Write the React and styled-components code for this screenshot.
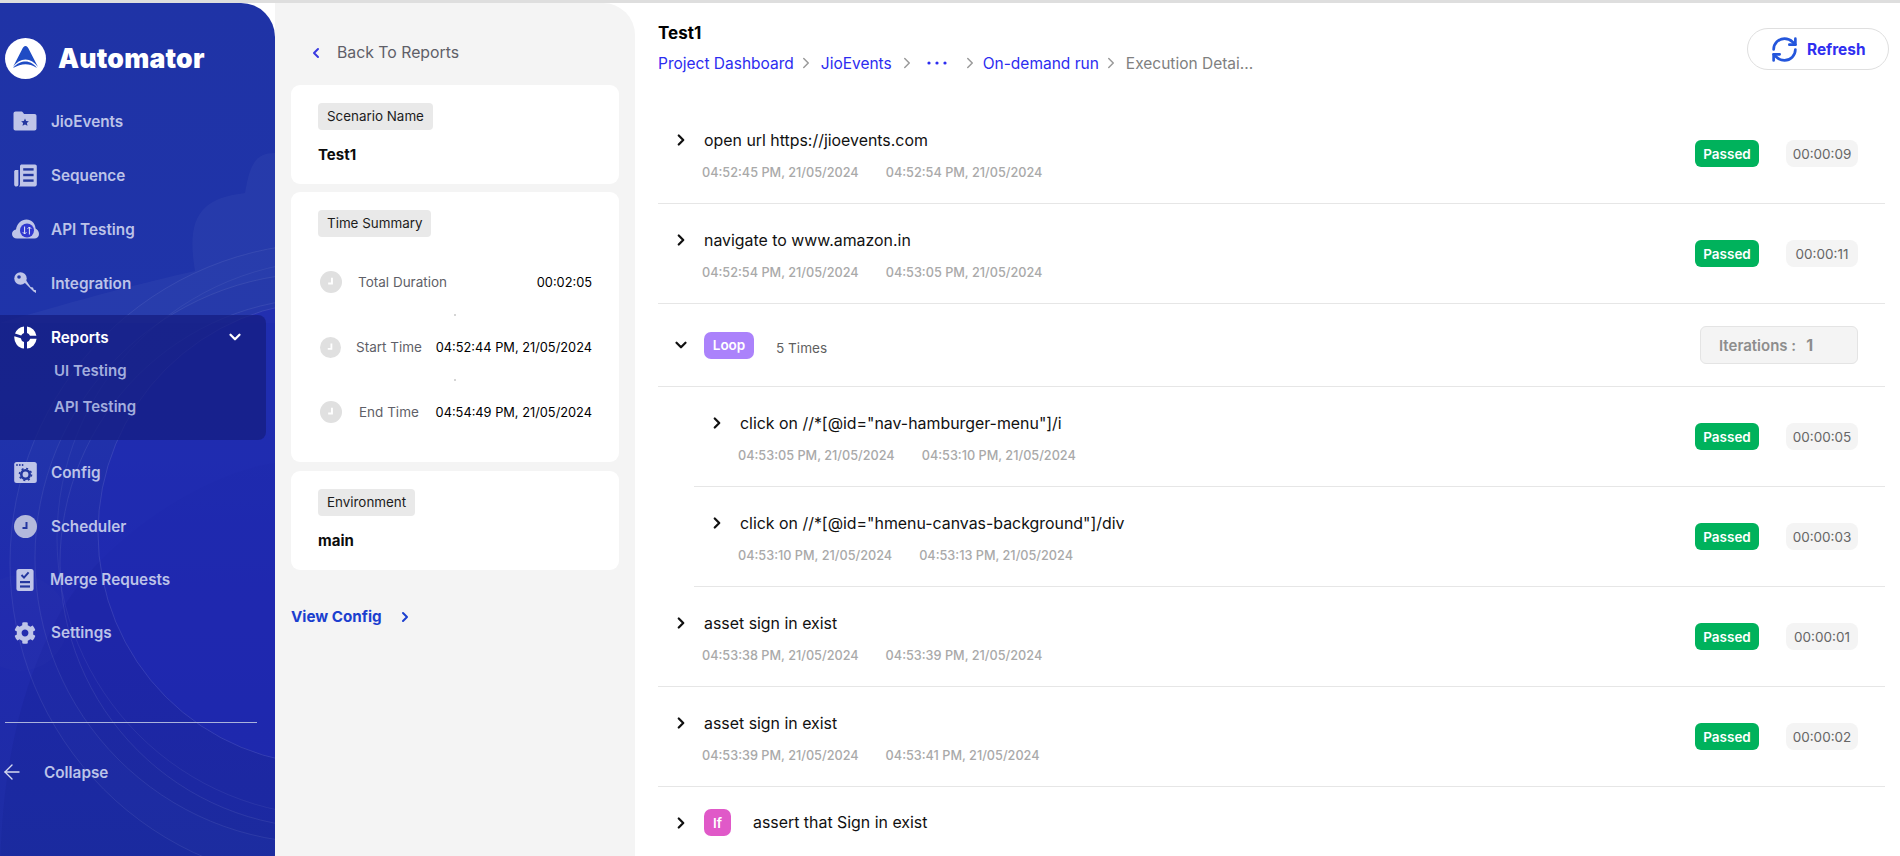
import styled, { createGlobalStyle } from 'styled-components';
import { ChevronDown, ChevronLeft, ChevronRight, ArrowLeft, RefreshCw } from 'lucide-react';
import { FaCog } from 'react-icons/fa';

const GlobalStyle = createGlobalStyle`
  html, body {
    margin: 0;
    padding: 0;
    height: 100%;
    overflow: hidden;
    background: #fff;
    font-family: Inter, "Liberation Sans", sans-serif;
  }
`;

const Page = styled.div`
  display: flex;
  height: 853px;
  border-top: 3px solid #dedede;
  overflow: hidden;
`;

const Sidebar = styled.aside`
  position: relative;
  flex: 0 0 275px;
  height: 885px;
  border-radius: 0 34px 34px 0;
  background: linear-gradient(180deg, #1f33a6 0%, #1f34aa 45%, #2029ae 70%, #1d2ea2 100%);
  overflow: hidden;
  color: #bcc3e8;
`;

const SidebarArt = styled.svg`
  position: absolute;
  inset: 0;
  width: 275px;
  height: 885px;
`;

const SidebarBody = styled.div`
  position: relative;
  display: flex;
  flex-direction: column;
`;

const Brand = styled.div`
  display: flex;
  align-items: center;
  gap: 12px;
  padding: 28px 0 0 5px;
  height: 54px;
  margin-bottom: 9px;
`;

const BrandName = styled.span`
  font-size: 26.6px;
  font-weight: 900;
  color: #fff;
  letter-spacing: 0.2px;
`;

const NavItem = styled.div`
  display: flex;
  align-items: center;
  height: ${({ $h }) => $h || 54}px;
  padding-left: ${({ $left }) => $left ?? 9}px;
  gap: ${({ $gap }) => $gap ?? 10}px;
  font-size: 15.3px;
  font-weight: 600;
  color: ${({ $active }) => ($active ? '#fff' : '#bcc3e8')};
`;

const NavIcon = styled.span`
  flex: 0 0 32px;
  width: 32px;
  height: 24px;
  display: flex;
  align-items: center;
  justify-content: center;
`;

const NavGroup = styled.div`
  width: 266px;
  height: 125px;
  margin: 5px 0 5px;
  background: rgba(22, 30, 130, 0.75);
  border-radius: 0 8px 8px 0;
  box-sizing: border-box;
`;

const GroupHead = styled(NavItem)`
  height: 44px;
  padding-right: 22px;
  & > svg {
    margin-left: auto;
  }
`;

const SubItem = styled.div`
  height: ${({ $h }) => $h}px;
  display: flex;
  align-items: center;
  padding-left: 54px;
  font-size: 15px;
  font-weight: 600;
  color: #a3aede;
`;

const SideDivider = styled.div`
  height: 1px;
  margin: 63px 18px 0 5px;
  background: #aab2dc;
`;

const CollapseRow = styled.div`
  display: flex;
  align-items: center;
  gap: 20px;
  margin-top: 37px;
  height: 24px;
  font-size: 15.3px;
  font-weight: 600;
  color: #bcc3e8;
`;

const Details = styled.section`
  flex: 0 0 360px;
  box-sizing: border-box;
  padding: 0 16px;
  background: #f4f4f4;
  border-radius: 0 32px 0 0;
`;

const BackLink = styled.div`
  display: flex;
  align-items: center;
  gap: 13px;
  height: 82px;
  padding: 17px 0 0 17px;
  box-sizing: border-box;
  font-size: 15.8px;
  color: #5f5f68;
`;

const Card = styled.div`
  background: #fff;
  border-radius: 9px;
  padding: 18px 27px 0;
  height: ${({ $h }) => $h}px;
  box-sizing: border-box;
  margin-bottom: ${({ $mb }) => $mb ?? 9}px;
`;

const Chip = styled.span`
  display: inline-block;
  height: 27px;
  line-height: 27px;
  padding: 0 9px;
  background: #e9e9e9;
  border-radius: 4px;
  font-size: 13.4px;
  color: #1c1c1c;
`;

const CardValue = styled.div`
  margin-top: 15px;
  font-size: 15px;
  font-weight: 700;
  color: #0c0c0c;
`;

const TimeRows = styled.div`
  display: flex;
  flex-direction: column;
  margin-top: 27px;
`;

const TimeRow = styled.div`
  display: flex;
  align-items: center;
  height: 36px;
  margin-left: 2px;
`;

const TimeTick = styled.div`
  height: 29px;
  display: flex;
  align-items: center;
  justify-content: center;
  &::after {
    content: '';
    width: 2px;
    height: 2px;
    background: #d5d5d5;
  }
`;

const TimeLabel = styled.span`
  margin-left: ${({ $left }) => $left}px;
  font-size: 13.5px;
  color: #5f5f68;
`;

const TimeValue = styled.span`
  margin-left: auto;
  font-size: 12.8px;
  color: #000;
`;

const ViewConfig = styled.div`
  display: flex;
  align-items: center;
  gap: 15px;
  margin-top: 37px;
  font-size: 15.2px;
  font-weight: 700;
  color: #1b3fcf;
`;

const Main = styled.main`
  flex: 1;
  min-width: 0;
  padding: 0 15px 0 23px;
`;

const Header = styled.header`
  display: flex;
  justify-content: space-between;
  height: 101px;
  box-sizing: border-box;
`;

const Title = styled.div`
  margin-top: 19px;
  height: 22px;
  line-height: 22px;
  font-size: 17px;
  font-weight: 700;
  color: #000;
`;

const Crumbs = styled.nav`
  display: flex;
  align-items: center;
  height: 22px;
  margin-top: 8px;
  font-size: 15.5px;
  color: #2c2cf0;
`;

const CrumbSep = styled(ChevronRight)`
  color: #9a9a9a;
  margin: 0 ${({ $r }) => $r ?? 6}px 0 ${({ $l }) => $l ?? 3}px;
`;

const CrumbDots = styled.svg`
  width: 20px;
  height: 6px;
`;

const CrumbLast = styled.span`
  color: #808080;
`;

const RefreshButton = styled.button`
  display: flex;
  align-items: center;
  gap: 8px;
  width: 142px;
  height: 42px;
  margin: 25px -4px 0 0;
  padding: 0 0 0 22px;
  box-sizing: border-box;
  background: #fff;
  border: 1px solid #dfdfdf;
  border-radius: 21px;
  font-family: Inter, sans-serif;
  font-size: 15.4px;
  font-weight: 700;
  color: #2f2ff0;
  & > svg {
    color: #2456dc;
  }
`;

const Row = styled.div`
  display: flex;
  justify-content: space-between;
  align-items: flex-start;
  height: 100px;
  box-sizing: border-box;
  padding: 25px 27px 0 13px;
  border-bottom: 1px solid #e6e6e6;
`;

const RowHead = styled.div`
  display: flex;
  align-items: center;
  height: 22px;
  gap: 13px;
  font-size: 15.9px;
  color: #111;
`;

const Toggle = styled.span`
  flex: 0 0 20px;
  height: 20px;
  display: flex;
  align-items: center;
  justify-content: center;
  color: #111;
`;

const RowTimes = styled.div`
  display: flex;
  gap: 27px;
  margin: 10px 0 0 31px;
  height: 22px;
  align-items: center;
  font-size: 12.7px;
  font-weight: 500;
  color: #a9a9a9;
`;

const RowRight = styled.div`
  display: flex;
  gap: 27px;
  margin-top: 11px;
`;

const Status = styled.span`
  display: flex;
  align-items: center;
  justify-content: center;
  width: 64px;
  height: 27px;
  border-radius: 6px;
  background: #00b25c;
  color: #fff;
  font-size: 13.5px;
  font-weight: 600;
`;

const Duration = styled.span`
  display: flex;
  align-items: center;
  justify-content: center;
  width: 72px;
  height: 27px;
  border-radius: 8px;
  background: #f4f4f4;
  color: #666;
  font-size: 13.5px;
`;

const Nested = styled.div`
  margin-left: 36px;
`;

const LoopRow = styled(Row)`
  height: 83px;
  padding-top: 0;
  align-items: center;
`;

const Badge = styled.span`
  display: flex;
  align-items: center;
  justify-content: center;
  width: ${({ $w }) => $w}px;
  height: 27px;
  border-radius: 7px;
  background: ${({ $bg }) => $bg};
  color: #fff;
  font-size: 13.5px;
  font-weight: 600;
`;

const LoopCount = styled.span`
  margin: 5px 0 0 9px;
  font-size: 13.6px;
  color: #5f5f5f;
`;

const Iterations = styled.div`
  display: flex;
  align-items: center;
  width: 158px;
  height: 38px;
  padding-left: 18px;
  box-sizing: border-box;
  background: #f4f4f4;
  border: 1px solid #e4e4e4;
  border-radius: 6px;
  font-size: 15px;
  font-weight: 600;
  color: #8d8d8d;
  & b {
    margin-left: 10px;
    font-size: 16px;
    font-weight: 700;
  }
`;

const IfRow = styled(Row)`
  height: 68px;
  padding-top: 22px;
  border-bottom: 0;
  & ${RowHead} {
    height: 27px;
  }
  & ${Badge} {
    margin-right: 9px;
  }
`;

const Logo = () => (
  <svg width="41" height="41" viewBox="0 0 41 41">
    <circle cx="20.5" cy="20.5" r="20.5" fill="#fff" />
    <path d="M20.5 8 C22 8 23 9.5 24 11.5 L33 29 C30 24.5 25 21.5 20.5 21.5 C16 21.5 11 24.5 8 29 L17 11.5 C18 9.5 19 8 20.5 8 Z" fill="#1f4cc4" />
    <path d="M8 30 C12 25 16.5 23.5 20.5 23.5 C25 23.5 29 26 32 30 C27.5 27 24 26.2 20.5 26.2 C16.5 26.2 12.5 27.5 8 30 Z" fill="#1f4cc4" />
  </svg>
);

const FolderIcon = () => (
  <svg width="24" height="20" viewBox="0 0 24 20">
    <path d="M0.5 2.5 C0.5 1.2 1.5 0.5 2.6 0.5 H8 C9 0.5 9.6 1 10.2 1.8 L11 3 H21.5 C22.8 3 23.5 3.8 23.5 5 V17.5 C23.5 18.8 22.6 19.5 21.5 19.5 H2.5 C1.3 19.5 0.5 18.7 0.5 17.5 Z" fill="#bfc5e8" />
    <path d="M12 7.5 L13.2 10 L15.9 10.3 L13.9 12.1 L14.5 14.8 L12 13.4 L9.5 14.8 L10.1 12.1 L8.1 10.3 L10.8 10 Z" fill="#24379f" />
  </svg>
);

const SequenceIcon = () => (
  <svg width="23" height="23" viewBox="0 0 23 23">
    <path d="M6 2 C6 1 6.8 0.4 7.8 0.4 H21 C22 0.4 22.8 1.2 22.8 2.2 V20.6 C22.8 21.7 22 22.5 21 22.5 H4 C5.2 22.5 6 21.6 6 20.4 Z" fill="#bfc5e8" />
    <path d="M0.2 7.5 C0.2 6.6 1 6 1.8 6 H4.4 V20.5 C4.4 21.6 3.6 22.5 2.4 22.5 C1 22.5 0.2 21.6 0.2 20.4 Z" fill="#bfc5e8" />
    <rect x="9.2" y="4.2" width="10.4" height="2.4" fill="#24379f" />
    <rect x="9.2" y="9.8" width="10.4" height="2.4" fill="#24379f" />
    <rect x="9.2" y="15.4" width="10.4" height="2.4" fill="#24379f" />
  </svg>
);

const CloudIcon = () => (
  <svg width="27" height="20" viewBox="0 0 27 20">
    <path d="M5 19.5 C2 19.5 0 17.6 0 15 C0 12.6 1.8 10.9 4 10.6 C4.8 4.6 9.5 0.5 14.5 0.5 C19.5 0.5 23 4 23.6 9.4 C25.6 10.4 27 12.4 27 15 C27 17.8 25 19.5 22.5 19.5 Z" fill="#bfc5e8" />
    <circle cx="15" cy="11.5" r="7" fill="#3138d0" />
    <path d="M12.6 7.5 V15 M10.8 13.2 L12.6 15 L14.4 13.2 M17.4 15.5 V8 M15.6 9.8 L17.4 8 L19.2 9.8" stroke="#e4e7f8" strokeWidth="1" fill="none" />
  </svg>
);

const KeyIcon = () => (
  <svg width="23" height="23" viewBox="0 0 23 23">
    <circle cx="6.5" cy="6.5" r="6.2" fill="#bfc5e8" />
    <circle cx="5" cy="5" r="1.8" fill="#2237a8" />
    <path d="M9 9 L19.5 19.5 L22 21 V18.2 L19.8 17.8 L19 15.4 L16.6 15 L11.5 7.5 Z" fill="#bfc5e8" />
  </svg>
);

const ReportsIcon = () => (
  <svg width="23" height="23" viewBox="0 0 23 23">
    <path d="M10 0.4 V7 A4.8 4.8 0 0 0 7.2 9.6 L1 7.6 A11 11 0 0 1 10 0.4 Z" fill="#fff" />
    <path d="M13 0.4 A11 11 0 0 1 22.4 9.8 H16 A4.8 4.8 0 0 0 13 7 Z" fill="#fff" />
    <path d="M0.4 10.2 L6.8 12.2 A4.8 4.8 0 0 0 10 16 V22.6 A11 11 0 0 1 0.4 10.2 Z" fill="#fff" />
    <path d="M16.2 12.8 H22.6 A11 11 0 0 1 13 22.6 V16 A4.8 4.8 0 0 0 16.2 12.8 Z" fill="#fff" />
  </svg>
);

const ConfigIcon = () => (
  <svg width="23" height="21" viewBox="0 0 23 21">
    <rect x="0.2" y="0" width="22.6" height="21" rx="2.5" fill="#bfc5e8" />
    <circle cx="3" cy="3" r="0.9" fill="#24379f" />
    <circle cx="5.8" cy="3" r="0.9" fill="#24379f" />
    <circle cx="8.6" cy="3" r="0.9" fill="#24379f" />
    <circle cx="11.5" cy="12.5" r="4.2" fill="none" stroke="#24379f" strokeWidth="2.6" />
    <circle cx="11.5" cy="12.5" r="6" fill="none" stroke="#24379f" strokeWidth="1.6" strokeDasharray="2 2.7" />
  </svg>
);

const ClockIcon = ({ size, color, hand }) => (
  <svg width={size} height={size} viewBox="0 0 23 23">
    <circle cx="11.5" cy="11.5" r="11.5" fill={color} />
    <path d="M12.5 7 V13 H8.5" fill="none" stroke={hand} strokeWidth="2" />
  </svg>
);

const MergeIcon = () => (
  <svg width="18" height="22" viewBox="0 0 18 22">
    <rect x="0.4" y="0" width="17.2" height="22" rx="2.5" fill="#bfc5e8" />
    <path d="M5.5 6 L8 8.6 L12.6 3.4" fill="none" stroke="#24379f" strokeWidth="2" />
    <rect x="4" y="12" width="10" height="2.2" fill="#24379f" />
    <rect x="4" y="16.4" width="10" height="2.2" fill="#24379f" />
  </svg>
);

const StepTitle = ({ toggle = 'right', children }) => (
  <RowHead>
    <Toggle>
      {toggle === 'right' ? <ChevronRight size={18} strokeWidth={3} /> : <ChevronDown size={18} strokeWidth={3} />}
    </Toggle>
    {children}
  </RowHead>
);

const Step = ({ title, start, end, duration }) => (
  <Row>
    <div>
      <StepTitle>{title}</StepTitle>
      <RowTimes>
        <span>{start}</span>
        <span>{end}</span>
      </RowTimes>
    </div>
    <RowRight>
      <Status>Passed</Status>
      <Duration>{duration}</Duration>
    </RowRight>
  </Row>
);

const App = () => (
  <>
    <GlobalStyle />
    <Page>
      <Sidebar>
        <SidebarArt viewBox="0 0 275 885">
          <path d="M245 190 C250 160 256 150 275 150 V320 H0 C80 296 150 278 195 268 C186 215 200 195 245 190 Z" fill="#fff" opacity="0.035" />
          <path d="M0 885 C0 800 10 700 60 610 C100 540 200 470 275 460 V885 Z" fill="#000f60" opacity="0.08" />
          <circle cx="330" cy="560" r="320" fill="#fff" fillOpacity="0.012" stroke="#fff" strokeOpacity="0.08" />
          <circle cx="320" cy="555" r="285" fill="#101a80" fillOpacity="0.05" stroke="#fff" strokeOpacity="0.08" />
          <circle cx="325" cy="560" r="265" fill="#2a2bc0" fillOpacity="0.08" stroke="#fff" strokeOpacity="0.08" />
          <circle cx="335" cy="535" r="278" fill="none" stroke="#fff" strokeOpacity="0.06" />
          <circle cx="330" cy="530" r="232" fill="#2029b4" fillOpacity="0.6" stroke="#fff" strokeOpacity="0.1" />
          <circle cx="20" cy="620" r="48" fill="#fff" fillOpacity="0.012" />
        </SidebarArt>
        <SidebarBody>
          <Brand>
            <Logo />
            <BrandName>Automator</BrandName>
          </Brand>
          <NavItem><NavIcon><FolderIcon /></NavIcon>JioEvents</NavItem>
          <NavItem><NavIcon><SequenceIcon /></NavIcon>Sequence</NavItem>
          <NavItem><NavIcon><CloudIcon /></NavIcon>API Testing</NavItem>
          <NavItem><NavIcon><KeyIcon /></NavIcon>Integration</NavItem>
          <NavGroup>
            <GroupHead $active>
              <NavIcon><ReportsIcon /></NavIcon>
              Reports
              <ChevronDown size={18} strokeWidth={3} color="#fff" />
            </GroupHead>
            <SubItem $h={22}>UI Testing</SubItem>
            <SubItem $h={50}>API Testing</SubItem>
          </NavGroup>
          <NavItem><NavIcon><ConfigIcon /></NavIcon>Config</NavItem>
          <NavItem><NavIcon><ClockIcon size={23} color="#b3b9dc" hand="#24379f" /></NavIcon>Scheduler</NavItem>
          <NavItem $h={53} $gap={9}><NavIcon><MergeIcon /></NavIcon>Merge Requests</NavItem>
          <NavItem $h={53}><NavIcon><FaCog size={22} color="#bfc5e8" /></NavIcon>Settings</NavItem>
          <SideDivider />
          <CollapseRow>
            <ArrowLeft size={24} strokeWidth={1.4} color="#d6daf0" />
            Collapse
          </CollapseRow>
        </SidebarBody>
      </Sidebar>

      <Details>
        <BackLink>
          <ChevronLeft size={16} strokeWidth={3} color="#3a3ae0" />
          Back To Reports
        </BackLink>
        <Card $h={99} $mb={8}>
          <Chip>Scenario Name</Chip>
          <CardValue>Test1</CardValue>
        </Card>
        <Card $h={270}>
          <Chip>Time Summary</Chip>
          <TimeRows>
            <TimeRow>
              <ClockIcon size={22} color="#e0e0e0" hand="#fff" />
              <TimeLabel $left={16}>Total Duration</TimeLabel>
              <TimeValue>00:02:05</TimeValue>
            </TimeRow>
            <TimeTick />
            <TimeRow>
              <ClockIcon size={21} color="#e0e0e0" hand="#fff" />
              <TimeLabel $left={15}>Start Time</TimeLabel>
              <TimeValue>04:52:44 PM, 21/05/2024</TimeValue>
            </TimeRow>
            <TimeTick />
            <TimeRow>
              <ClockIcon size={22} color="#e0e0e0" hand="#fff" />
              <TimeLabel $left={17}>End Time</TimeLabel>
              <TimeValue>04:54:49 PM, 21/05/2024</TimeValue>
            </TimeRow>
          </TimeRows>
        </Card>
        <Card $h={99}>
          <Chip>Environment</Chip>
          <CardValue>main</CardValue>
        </Card>
        <ViewConfig>
          View Config
          <ChevronRight size={16} strokeWidth={3} />
        </ViewConfig>
      </Details>

      <Main>
        <Header>
          <div>
            <Title>Test1</Title>
            <Crumbs>
              Project Dashboard
              <CrumbSep size={18} />
              JioEvents
              <CrumbSep size={18} $l={6} $r={11} />
              <CrumbDots viewBox="0 0 20 6">
                <circle cx="2" cy="3" r="1.6" fill="#2c2cf0" />
                <circle cx="10" cy="3" r="1.6" fill="#2c2cf0" />
                <circle cx="18" cy="3" r="1.6" fill="#2c2cf0" />
              </CrumbDots>
              <CrumbSep size={18} $l={14} $r={4} />
              On-demand run
              <CrumbSep size={18} />
              <CrumbLast>Execution Detai...</CrumbLast>
            </Crumbs>
          </div>
          <RefreshButton>
            <RefreshCw size={29} strokeWidth={2.2} />
            Refresh
          </RefreshButton>
        </Header>

        <Step title="open url https://jioevents.com" start="04:52:45 PM, 21/05/2024" end="04:52:54 PM, 21/05/2024" duration="00:00:09" />
        <Step title="navigate to www.amazon.in" start="04:52:54 PM, 21/05/2024" end="04:53:05 PM, 21/05/2024" duration="00:00:11" />

        <LoopRow>
          <StepTitle toggle="down">
            <Badge $w={50} $bg="#ab82fb">Loop</Badge>
            <LoopCount>5 Times</LoopCount>
          </StepTitle>
          <Iterations>
            Iterations : <b>1</b>
          </Iterations>
        </LoopRow>

        <Nested>
          <Step title={'click on //*[@id="nav-hamburger-menu"]/i'} start="04:53:05 PM, 21/05/2024" end="04:53:10 PM, 21/05/2024" duration="00:00:05" />
          <Step title={'click on //*[@id="hmenu-canvas-background"]/div'} start="04:53:10 PM, 21/05/2024" end="04:53:13 PM, 21/05/2024" duration="00:00:03" />
        </Nested>

        <Step title="asset sign in exist" start="04:53:38 PM, 21/05/2024" end="04:53:39 PM, 21/05/2024" duration="00:00:01" />
        <Step title="asset sign in exist" start="04:53:39 PM, 21/05/2024" end="04:53:41 PM, 21/05/2024" duration="00:00:02" />

        <IfRow>
          <StepTitle>
            <Badge $w={27} $bg="#e059c8">If</Badge>
            assert that Sign in exist
          </StepTitle>
        </IfRow>
      </Main>
    </Page>
  </>
);

export default App;
